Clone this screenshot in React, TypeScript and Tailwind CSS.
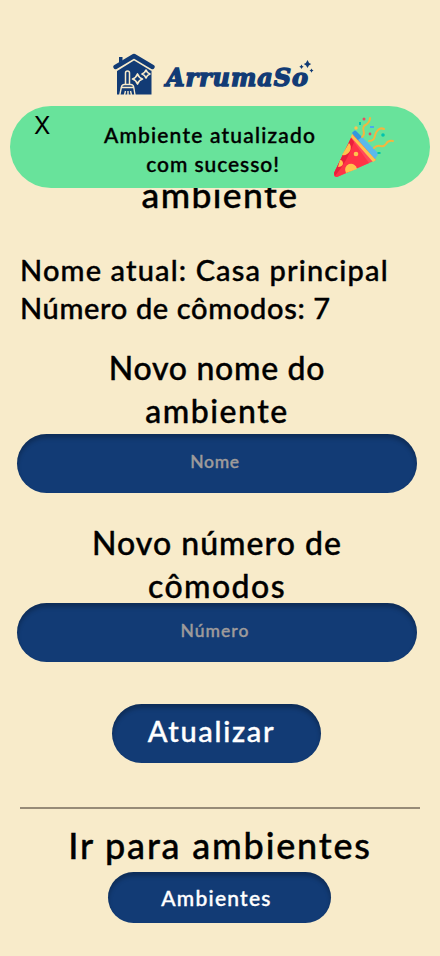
import React from "react";

function House() {
  return (
    <svg className="h-[43px] w-[43px] shrink-0" viewBox="0 0 43 43" fill="none">
      <path d="M6 4h3.500v5l-3.500 2z" fill="#123b75" />
      <path d="M4 17 21 5.500 38.500 17v24.500H4z" fill="#123b75" />
      <path d="M2.500 15.500 21 4l19 11.500" stroke="#f8ebca" strokeWidth="6" />
      <path d="M2.500 14 21 3l18.500 11" stroke="#123b75" strokeWidth="4.400" strokeLinecap="round" strokeLinejoin="round" />
      <path d="M12.500 31V20q0-2 2-2t2 2v11" stroke="#f8ebca" strokeWidth="1.500" />
      <path d="M6.800 42l1.500-7.500q.5-3 3-3h6.500q2.500 0 3 3L22 42M8 34.500h13M11.500 42l1-4M15 42v-4M18.500 42l-1-4" stroke="#f8ebca" strokeWidth="1.400" />
      <path d="M24.500 21q1.500 4 5 5-3.500 1-5 5-1.500-4-5-5 3.500-1 5-5zM33 17q1 3 4 4-3 1-4 4-1-3-4-4 3-1 4-4z" stroke="#f8ebca" strokeWidth="1.700" strokeLinejoin="round" />
    </svg>
  );
}

function Sparkles() {
  return (
    <svg className="absolute left-[133px] -top-[2px] h-[15px] w-[15px]" viewBox="0 0 15 15" fill="#123b75">
      <path d="M8.500 0q.9 3.200 3.700 4-2.800.9-3.700 4-1-3.100-3.700-4 2.800-.8 3.700-4z" />
      <path d="M2.500 4.500q.6 1.700 2.200 2.200-1.600.6-2.200 2.300-.6-1.700-2.200-2.300 1.600-.5 2.200-2.200zM12.500 8.500q.5 1.700 2 2-1.500.5-2 2.200-.5-1.700-2-2.200 1.500-.3 2-2z" />
    </svg>
  );
}

function PartyPopper() {
  return (
    <svg className="h-[62px] w-[62px] shrink-0" viewBox="0 0 62 62" fill="none">
      <path d="M20 18 1 57q-.5 4 3 4l39-17z" fill="#ff4b5c" />
      <path d="M18 22 1 57q-.5 4 3 4l32-14z" fill="#ff3347" />
      <path d="M18 22 1 57l1 3q13-16 19-34z" fill="#e91f3b" />
      <path d="M16 27q3 3 1 8-3 5-8 4zM7 44q3 0 3 4-1 3-5 3z" fill="#ffc34d" />
      <path d="M13 57a6 6 0 1 1 11-4z" fill="#ffc34d" />
      <circle cx="23" cy="38" r="2.300" fill="#ffc34d" />
      <path d="m18 21 22 25 3-2-24-26z" fill="#ffc34d" />
      <path d="m19 17 2-2q1-1 2 0l20 20q3 3 1 5l-2 3z" fill="#5ab9ec" />
      <path d="m19 17 2-2q1-1 2 0l6 6-4 3z" fill="#3498db" />
      <path d="M29 21c5-4-1-7 2-11 3-2 6-3 6-8M36 25c8 0 4-7 9-11 2-2 4-2 6-1M41 32c5-6 8 2 12-4q2-4 7-3" stroke="#f4b63f" strokeWidth="2" strokeLinecap="round" />
      <circle cx="31" cy="3" r="1.500" fill="#e94b60" />
      <circle cx="37" cy="18" r="1.400" fill="#e94b60" />
      <circle cx="23" cy="12" r="1.700" fill="#ffc34d" />
      <circle cx="50" cy="19" r="1.800" fill="#00c4ad" />
      <path d="M26 6h2v3h-2zM44.500 36h3v2h-3z" fill="#00c4ad" />
      <path d="M37 10h4v2h-4z" fill="#4ba9ed" />
    </svg>
  );
}

const inset = "shadow-[inset_0_4px_4px_rgba(0,0,0,0.25)]";

export default function App() {
  return (
    <main className="relative flex h-[956px] w-[440px] flex-col overflow-hidden bg-[#f8ebca] font-['Lato',sans-serif] font-medium text-black [-webkit-text-stroke:0.4px]">
      <header className="ml-[113px] flex h-[97px] items-end pb-[1px]">
        <House />
        <div className="relative mb-[2px] ml-[10px] h-[32px]">
          <span className="block whitespace-nowrap font-['DejaVu_Serif',serif] text-[24px] font-bold italic leading-[32px] tracking-[0.9px] text-[#123b75] [-webkit-text-stroke:1.4px_#123b75]">ArrumaSo</span>
          <Sparkles />
        </div>
      </header>

      <h1 className="mt-[74px] text-center text-[35.5px] leading-[48px] tracking-[1.4px]">ambiente</h1>

      <section className="mt-[32px] ml-[20px] whitespace-nowrap text-[29px] leading-[38px]">
        <p className="tracking-[1.14px]">Nome atual: Casa principal</p>
        <p className="tracking-[0.65px]">Número de cômodos: 7</p>
      </section>

      <form className="ml-[17px] flex w-[400px] flex-col items-center" onSubmit={(e) => e.preventDefault()}>
        <label htmlFor="nome" className="mt-[19px] flex h-[88px] flex-col text-center text-[32px] leading-[43px]">
          <span className="tracking-[0.7px]">Novo nome do</span>
          <span className="tracking-[1.5px]">ambiente</span>
        </label>
        <input id="nome" placeholder="Nome" className={`h-[59px] w-[400px] rounded-[30px] bg-[#123b75] pr-[4px] pb-[5px] text-center text-[17.5px] tracking-[0.7px] text-white outline-none placeholder:text-[#9f9b9b] ${inset}`} />
        <label htmlFor="numero" className="mt-[28px] flex h-[82px] flex-col text-center text-[32px] leading-[43px]">
          <span className="tracking-[1.02px]">Novo número de</span>
          <span className="tracking-[1.45px]">cômodos</span>
        </label>
        <input id="numero" placeholder="Número" className={`h-[59px] w-[400px] rounded-[30px] bg-[#123b75] pr-[4px] pb-[5px] text-center text-[17.5px] tracking-[1px] text-white outline-none placeholder:text-[#9f9b9b] ${inset}`} />
        <button className={`mt-[42px] mr-[1px] h-[59px] w-[209px] rounded-[30px] bg-[#123b75] pr-[10px] pb-[5px] text-[29px] tracking-[1.7px] text-white ${inset}`}>Atualizar</button>
      </form>

      <hr className="mx-[20px] mt-[44px] border-0 border-t-2 border-[#978b77]" />
      <h2 className="mt-[14px] text-center text-[36px] leading-[44px] tracking-[1.8px]">Ir para ambientes</h2>
      <button className={`mt-[5px] ml-[108px] h-[51px] w-[223px] rounded-[26px] bg-[#123b75] pr-[6px] text-[21px] tracking-[1.25px] text-white ${inset}`}>Ambientes</button>

      <div role="status" className="absolute top-[106px] left-[10px] flex h-[82px] w-[420px] rounded-[41px] bg-[#68e39b]">
        <button className="mt-[5px] ml-[24px] h-[30px] w-[16px] font-['Inter',sans-serif] text-[24px] font-normal leading-[30px] [-webkit-text-stroke:0]">X</button>
        <p className="mt-[14px] ml-[37px] flex w-[246px] flex-col text-center text-[21px] leading-[29px]">
          <span className="tracking-[1.2px]">Ambiente atualizado</span>
          <span className="pl-[6px] tracking-[0.95px]">com sucesso!</span>
        </p>
        <div className="mt-[10px]"><PartyPopper /></div>
      </div>
    </main>
  );
}
